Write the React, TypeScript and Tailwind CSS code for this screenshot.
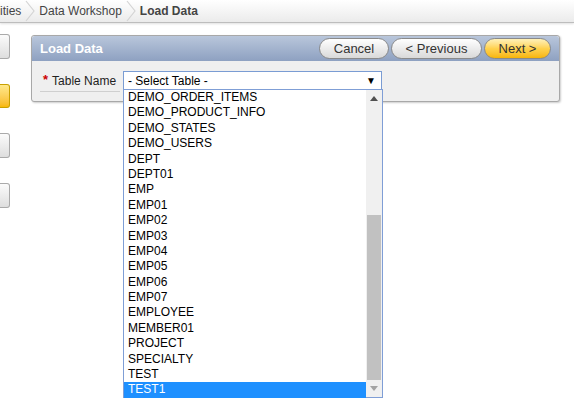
import React from "react";

const tables = [
  "DEMO_ORDER_ITEMS",
  "DEMO_PRODUCT_INFO",
  "DEMO_STATES",
  "DEMO_USERS",
  "DEPT",
  "DEPT01",
  "EMP",
  "EMP01",
  "EMP02",
  "EMP03",
  "EMP04",
  "EMP05",
  "EMP06",
  "EMP07",
  "EMPLOYEE",
  "MEMBER01",
  "PROJECT",
  "SPECIALTY",
  "TEST",
  "TEST1",
];

const Chevron = () => (
  <svg width="12" height="22" viewBox="0 0 12 22" className="shrink-0">
    <path d="M2 1 L10 11 L2 21" fill="none" stroke="#d4d4d4" strokeWidth="1.2" />
  </svg>
);

const PillButton = ({ label, hot, w }: { label: string; hot?: boolean; w: string }) => (
  <button
    className={`${w} h-[21px] rounded-full border border-[#8a8a8a] text-[13px] leading-none text-[#333] ${
      hot
        ? "bg-gradient-to-b from-[#fff1b8] via-[#ffd24d] to-[#f7b500]"
        : "bg-gradient-to-b from-[#ffffff] to-[#d9d9d9]"
    }`}
  >
    {label}
  </button>
);

export default function App() {
  return (
    <div className="w-[574px] h-[416px] bg-white overflow-hidden font-['Liberation_Sans',Arial,sans-serif]">
      {/* breadcrumb */}
      <div className="h-[23px] flex items-center bg-gradient-to-b from-[#ffffff] to-[#ebebeb] border-b border-[#bdbdbd] shadow-[0_1px_2px_rgba(0,0,0,0.12)] text-[12px] text-[#444]">
        <span className="pr-[3px]">ities</span>
        <Chevron />
        <span className="px-[3px]">Data Workshop</span>
        <Chevron />
        <span className="px-[3px] font-bold">Load Data</span>
      </div>

      <div className="flex">
        {/* cut-off side buttons */}
        <div className="w-[10px] flex flex-col pt-[11px] gap-[25px]">
          <div className="h-[25px] rounded-r-[3px] border border-l-0 border-[#aaa] bg-gradient-to-b from-[#fbfbfb] to-[#dedede]" />
          <div className="h-[24px] rounded-r-[3px] border border-l-0 border-[#c9a000] bg-gradient-to-b from-[#ffe98a] to-[#f8b800]" />
          <div className="h-[25px] rounded-r-[3px] border border-l-0 border-[#aaa] bg-gradient-to-b from-[#fbfbfb] to-[#dedede]" />
          <div className="h-[25px] rounded-r-[3px] border border-l-0 border-[#aaa] bg-gradient-to-b from-[#fbfbfb] to-[#dedede]" />
        </div>

        {/* region */}
        <div className="ml-[21px] mt-[12px] w-[529px] h-[67px] rounded-[3px] border border-[#a8a8a8] shadow-[1px_1px_2px_rgba(0,0,0,0.2)] bg-[#efefef] relative">
          <div className="h-[25px] flex items-center justify-between pl-[8px] pr-[8px] rounded-t-[3px] bg-gradient-to-b from-[#b9c6db] to-[#8ea1c1]">
            <span className="text-white font-bold text-[13px]">Load Data</span>
            <div className="flex gap-[2px] items-center">
              <PillButton label="Cancel" w="w-[70px]" />
              <PillButton label="< Previous" w="w-[91px]" />
              <PillButton label="Next >" hot w="w-[67px]" />
            </div>
          </div>
          <div className="flex pt-[10px] pl-[8px]">
            <div className="w-[80px] h-[21px] border-b border-[#cfcfcf] flex items-center text-[12px] text-[#222]">
              <span className="text-[#c00] text-[13px] font-bold mr-[4px] ml-[3px] -mt-[3px]">*</span>
              Table Name
            </div>
            <div className="ml-[3px] relative">
              <div className="w-[259px] h-[19px] border border-[#7a9cd3] bg-white flex items-center justify-between pl-[4px] pr-[5px] text-[12px] text-black">
                <span>- Select Table -</span>
                <span className="text-[10px]">▼</span>
              </div>
              {/* open list */}
              <div className="absolute left-0 top-[18px] w-[260px] h-[309px] border border-[#7f9ed6] bg-white flex z-10">
                <div className="flex-1 flex flex-col">
                  {tables.map((t) => (
                    <div
                      key={t}
                      className={`h-[15.4px] leading-[15.4px] pl-[4px] text-[12px] ${
                        t === "TEST1" ? "bg-[#1e90ff] text-white" : "text-black"
                      }`}
                    >
                      {t}
                    </div>
                  ))}
                </div>
                <div className="w-[16px] bg-[#f0f0f0] flex flex-col items-center">
                  <div className="h-[17px] flex items-center justify-center">
                    <svg width="8" height="5" viewBox="0 0 8 5"><path d="M0 5 L4 0 L8 5 Z" fill="#505050" /></svg>
                  </div>
                  <div className="flex-1 w-full px-[1px] flex flex-col">
                    <div className="flex-1" />
                    <div className="h-[165px] w-full bg-[#c1c1c1]" />
                  </div>
                  <div className="h-[17px] flex items-center justify-center">
                    <svg width="8" height="5" viewBox="0 0 8 5"><path d="M0 0 L8 0 L4 5 Z" fill="#a3a3a3" /></svg>
                  </div>
                </div>
              </div>
            </div>
          </div>
        </div>
      </div>
    </div>
  );
}
